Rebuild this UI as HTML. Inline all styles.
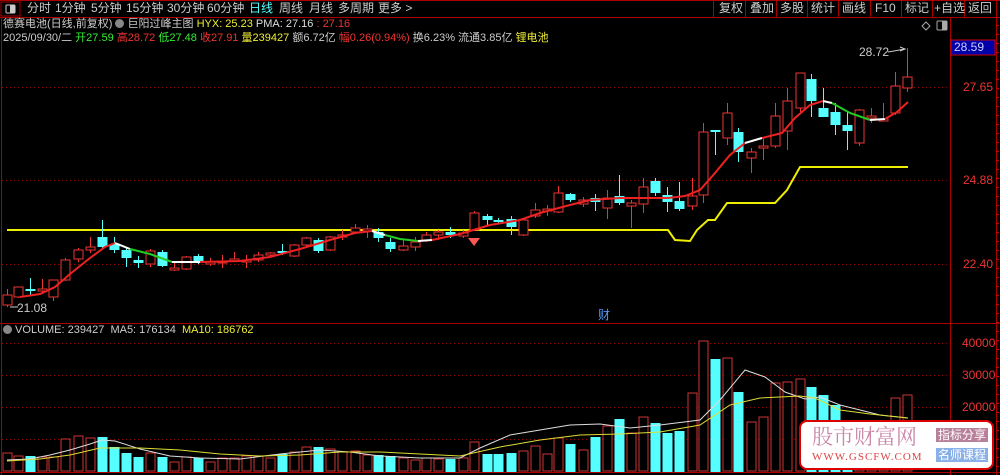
<!DOCTYPE html>
<html><head><meta charset="utf-8">
<style>
html,body{margin:0;padding:0;background:#000;width:1000px;height:475px;overflow:hidden;font-family:"Liberation Sans","Noto Sans CJK SC",sans-serif;}
#wrap{position:relative;width:1000px;height:475px;}
.t{position:absolute;white-space:nowrap;font-size:12px;line-height:14px;}
.m{position:absolute;white-space:nowrap;font-size:12px;line-height:14px;top:1px;color:#ccc}
</style></head><body><div id="wrap">
<svg id="s" width="1000" height="475" style="position:absolute;left:0;top:0" xmlns="http://www.w3.org/2000/svg"></svg>
<div class="m" style="left:27px">分时</div>
<div class="m" style="left:55px">1分钟</div>
<div class="m" style="left:91px">5分钟</div>
<div class="m" style="left:126px">15分钟</div>
<div class="m" style="left:167px">30分钟</div>
<div class="m" style="left:207px">60分钟</div>
<div class="m" style="left:249px;color:#5ff">日线</div>
<div class="m" style="left:279px">周线</div>
<div class="m" style="left:309px">月线</div>
<div class="m" style="left:338px">多周期</div>
<div class="m" style="left:378px">更多 &gt;</div>
<div class="m" style="left:719px">复权</div>
<div class="m" style="left:750px">叠加</div>
<div class="m" style="left:780px">多股</div>
<div class="m" style="left:811px">统计</div>
<div class="m" style="left:842px">画线</div>
<div class="m" style="left:875px">F10</div>
<div class="m" style="left:905px">标记</div>
<div class="m" style="left:934px">+自选</div>
<div class="m" style="left:968px">返回</div>
<div class="t" style="left:3px;top:17px;color:#ccc;font-size:11px">德赛电池(日线,前复权) <span style="display:inline-block;width:9px;height:9px;border-radius:5px;background:#888;vertical-align:-1px"></span> 巨阳过峰主图 <span style="color:#ee3">HYX: 25.23</span> <span style="color:#ddd">PMA: 27.16</span> <span style="color:#e33">: 27.16</span></div>
<div class="t" style="left:3px;top:31px;color:#ccc;font-size:11px">2025/09/30/二 <span style="color:#3e3">开27.59</span> <span style="color:#e33">高28.72</span> <span style="color:#3e3">低27.48</span> <span style="color:#e33">收27.91</span> <span style="color:#ee3">量239427</span> 额6.72亿 <span style="color:#e33">幅0.26(0.94%)</span> 换6.23% 流通3.85亿 <span style="color:#ee3">锂电池</span></div>
<div class="t" style="left:859px;top:45px;color:#ccc">28.72</div>
<div class="t" style="left:17px;top:301px;color:#ccc">21.08</div>
<div class="t" style="left:954px;top:40px;color:#ccf;font-size:12px">28.59</div>
<div class="t" style="left:963px;top:80px;color:#e33">27.65</div>
<div class="t" style="left:963px;top:173px;color:#e33">24.88</div>
<div class="t" style="left:963px;top:257px;color:#e33">22.40</div>
<div class="t" style="left:962px;top:336px;color:#e33">40000</div>
<div class="t" style="left:962px;top:368px;color:#e33">30000</div>
<div class="t" style="left:962px;top:400px;color:#e33">20000</div>
<div class="t" style="left:598px;top:308px;color:#59f">财</div>
<div class="t" style="left:3px;top:323px;color:#ccc;font-size:11px"><span style="display:inline-block;width:9px;height:9px;border-radius:5px;background:#888;vertical-align:-1px"></span> VOLUME: 239427&nbsp; MA5: 176134&nbsp; <span style="color:#ee3">MA10: 186762</span></div>
<div style="position:absolute;left:799px;top:420px;width:195px;height:50px;background:#fff;border:2px solid #d00;border-radius:8px;box-sizing:border-box"></div>
<div class="t" style="left:812px;top:424px;font-size:21px;line-height:24px;color:#c8a;font-family:'Noto Serif CJK SC',serif">股市财富网</div>
<div class="t" style="left:812px;top:450px;font-size:11px;color:#d44;font-family:'Liberation Serif',serif;letter-spacing:1px">WWW.GSCFW.COM</div>
<div class="t" style="left:936px;top:428px;background:#b8809a;color:#fff;font-size:12px;padding:0 2px">指标分享</div>
<div class="t" style="left:936px;top:448px;background:#8ab0e8;color:#fff;font-size:12px;padding:0 2px">名师课程</div>
</div>
<script>
var s=document.getElementById('s'),h='';
function L(x1,y1,x2,y2,c,w,d){h+='<line x1="'+x1+'" y1="'+y1+'" x2="'+x2+'" y2="'+y2+'" stroke="'+c+'" stroke-width="'+(w||1)+'"'+(d?' stroke-dasharray="'+d+'"':'')+'/>';}
function P(pts,c,w){h+='<polyline fill="none" stroke="'+c+'" stroke-width="'+(w||1)+'" points="'+pts+'"/>';}
L(0,17.5,1000,17.5,'#a00');L(0,0.5,1000,0.5,'#a00');
h+='<rect x="1" y="2" width="19" height="14" fill="none" stroke="#a00"/><rect x="6" y="5" width="9" height="8" fill="none" stroke="#ccc" rx="1"/><rect x="10" y="5" width="5" height="8" fill="#ccc"/>';
[713,745,776,807,838,870,901,932,964,996].forEach(function(x){L(x+.5,0,x+.5,17,'#a00');});
L(1.5,17,1.5,475,'#a00');L(950.5,17,950.5,475,'#a00');L(996.5,17,996.5,475,'#a00');
L(0,323.5,1000,323.5,'#a00');L(0,472.5,1000,472.5,'#a00');
h+='<rect x="951" y="40" width="44" height="15" fill="#0000a8" stroke="#c00"/>';
h+='<path d="M922 26 l4-4 4 4-4 4z" fill="none" stroke="#aaa"/><rect x="937" y="21" width="10" height="9" fill="none" stroke="#aaa" rx="1"/><rect x="942" y="21" width="5" height="9" fill="#aaa"/>';
[87,180,264].forEach(function(y){L(2,y+.5,950,y+.5,'#900',1,'1,3');});
[343,375,407,439].forEach(function(y){L(2,y+.5,950,y+.5,'#900',1,'1,3');});
for(var y=25;y<470;y+=9)L(996,y+.5,999,y+.5,'#c00');
P('7,230 668,230 675,240 690,241 697,230 708,220 715,220 727,203 775,203 787,190 800,167 908,167','#ee0',2);
var c=[[7,295,305,289,307,1],[18,287,297,287,298,1],[30,289,291,278,295,0],[42,289,291,279,293,1],[53,280,297,280,301,1],[65,260,280,258,281,1],[78,250,259,248,262,1],[90,247,250,237,253,1],[102,237,247,220,248,0],[114,244,250,237,253,0],[126,250,258,248,267,0],[138,260,263,256,268,0],[150,251,264,249,267,1],[162,252,266,250,267,0],[174,268,270,262,271,1],[186,257,269,256,270,1],[198,256,262,254,264,0],[210,262,264,258,266,1],[222,261,263,255,268,1],[234,259,261,252,262,1],[246,260,262,255,268,1],[258,255,260,252,262,1],[270,253,255,252,257,1],[282,251,253,244,255,0],[294,245,256,244,257,1],[306,238,245,237,248,1],[318,240,251,238,253,0],[330,237,250,236,251,1],[342,235,237,230,240,1],[355,228,232,224,234,1],[367,229,231,225,238,1],[378,232,238,228,242,0],[390,242,249,238,252,0],[403,246,250,240,251,1],[415,242,247,237,251,1],[426,235,240,232,242,1],[438,232,235,230,240,1],[450,232,235,227,238,0],[463,233,236,230,238,1],[474,213,230,211,231,1],[487,216,220,214,225,0],[498,220,222,218,224,0],[511,219,227,216,235,0],[523,220,235,218,236,1],[535,210,216,203,218,1],[547,209,211,205,216,1],[558,193,212,186,213,1],[570,194,200,193,202,0],[583,200,204,197,207,1],[595,198,202,194,211,0],[607,198,208,190,219,1],[619,196,203,175,205,0],[631,203,206,200,228,1],[643,187,204,178,213,1],[655,181,193,178,196,0],[667,195,202,187,212,0],[679,201,209,182,211,0],[692,196,206,178,210,1],[703,132,195,123,203,1],[715,130,132,130,155,0],[727,113,138,103,145,1],[738,132,152,128,162,0],[751,152,158,148,173,1],[763,146,148,138,160,1],[775,116,146,103,148,1],[787,101,131,88,150,1],[800,73,108,73,112,1],[811,79,101,74,117,0],[823,108,117,88,117,0],[835,112,125,103,135,0],[847,125,131,112,150,0],[859,110,143,109,146,1],[871,116,118,108,123,1],[883,119,121,103,121,1],[895,86,113,72,115,1],[907,77,88,48,92,1]];
var vt=[453,456,456,457,457,439,436,438,437,447,453,457,453,457,462,457,458,462,458,458,456,456,458,454,452,447,447,449,452,451,455,455,456,458,460,458,459,459,458,442,454,454,453,451,446,454,438,444,450,437,426,419,433,417,423,433,431,393,341,359,358,392,422,417,383,382,379,387,395,405,420,430,440,440,398,395];
c.forEach(function(k,i){var x=k[0],bw=9;
 L(x+.5,k[3],x+.5,k[4],k[5]?'#e33':'#5ff');
 if(k[5])h+='<rect x="'+(x-4)+'" y="'+k[1]+'" width="'+bw+'" height="'+Math.max(1,k[2]-k[1])+'" fill="#000" stroke="#e33"/>';
 else h+='<rect x="'+(x-4.5)+'" y="'+k[1]+'" width="'+(bw+1)+'" height="'+Math.max(1,k[2]-k[1])+'" fill="#5ff"/>';
 var t=vt[i]; if(t){ if(k[5])h+='<rect x="'+(x-4)+'" y="'+t+'" width="9" height="'+(471-t)+'" fill="#000" stroke="#c33"/>';
 else h+='<rect x="'+(x-4.5)+'" y="'+t+'" width="10" height="'+(472-t)+'" fill="#5ff"/>';}
});
P('20,297 40,294 55,287 70,274 90,258 105,247 115,243','#e22',2);
P('115,243 130,249','#fff',2);P('130,249 150,254 172,262','#2c2',2);P('172,262 200,262','#fff',2);
P('200,262 240,261 270,257 300,249 330,240 355,233 372,231','#e22',2);P('372,231 385,235','#fff',2);
P('385,235 400,239 418,241','#2c2',2);P('418,241 432,240','#fff',2);P('432,240 460,234 490,225 520,220 540,213 570,205 590,200','#e22',2);
P('590,200 620,198 635,198 650,198 668,198','#e22',2);
P('668,198 685,196 700,190 715,173 730,155 745,143','#e22',2);P('745,143 762,138','#fff',2);P('762,138 782,133 795,118 810,105 823,101','#e22',2);
P('823,101 832,103','#fff',2);P('832,103 850,113 870,120','#2c2',2);P('870,120 885,119','#fff',2);P('885,119 897,112 908,102','#e22',2);
P('888,52 905,49','#ccc',1);P('900,47 905,49 900,51','#ccc',1);P('18,307 10,307','#ccc',1);
P('7,460 30,459 50,455 70,450 90,444 102,440 115,441 140,449 170,456 200,458 240,459 280,454 320,450 350,452 380,456 420,458 460,458 480,448 510,435 540,430 570,425 600,424 630,428 660,425 700,420 720,400 745,370 765,377 785,392 805,399 820,397 840,405 880,415 908,418','#ddd',1);
P('7,461 40,459 70,455 100,448 140,448 180,450 220,454 260,456 300,455 340,452 380,452 420,454 460,456 500,447 540,440 580,435 620,434 660,432 700,425 730,405 760,398 800,396 815,398 840,410 870,414 908,418','#dd3',1);
h+='<path d="M468 238 h12 l-6 8z" fill="#f55"/>';
s.innerHTML=h;
</script>
</body></html>
